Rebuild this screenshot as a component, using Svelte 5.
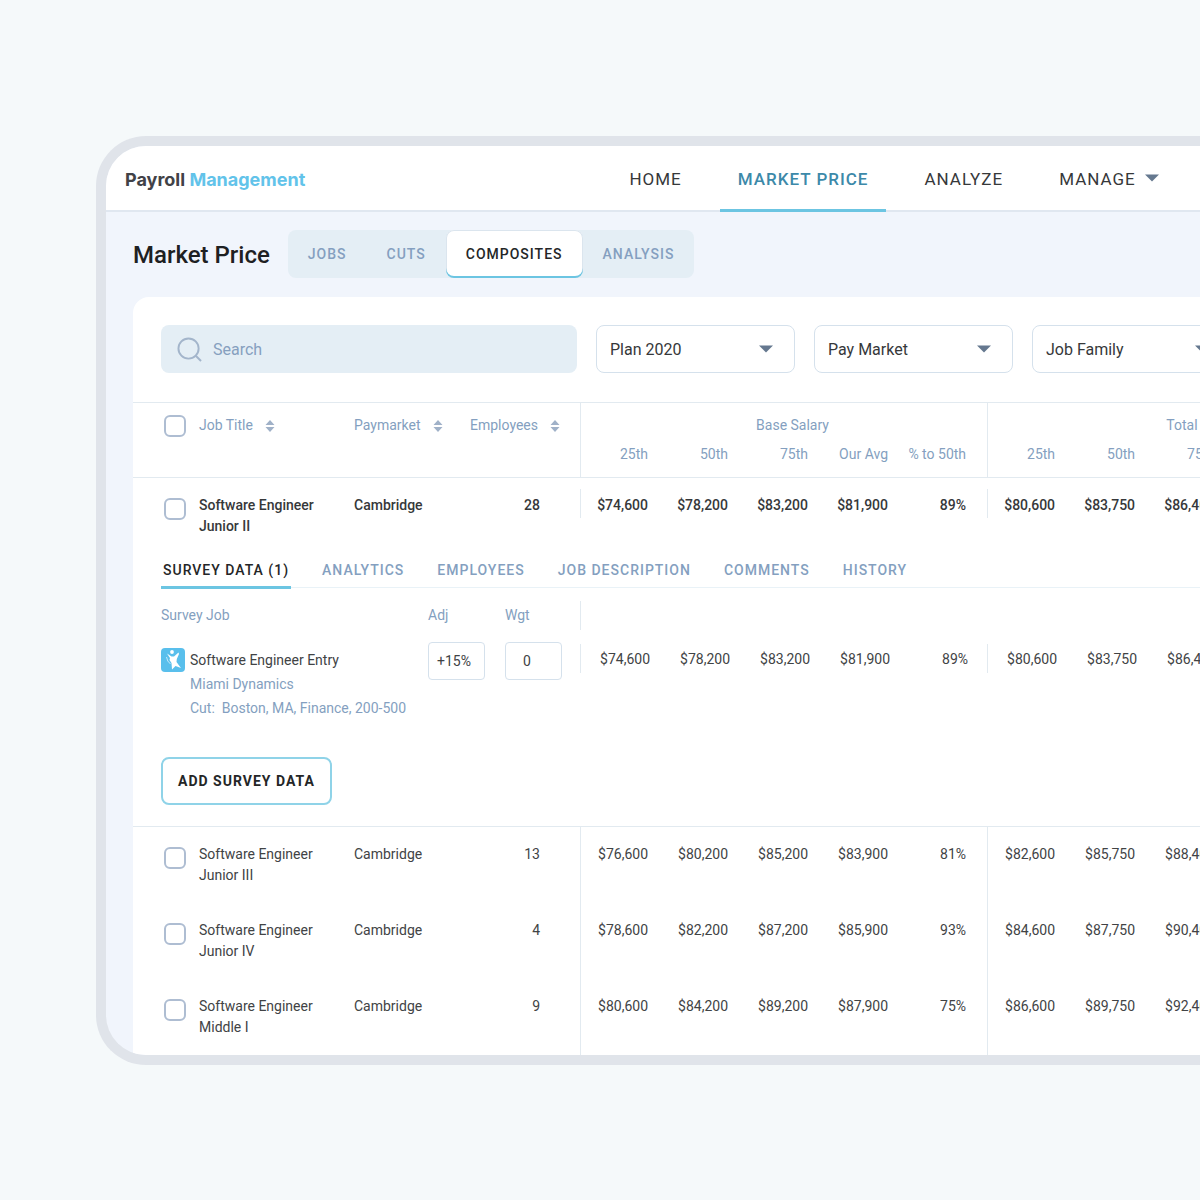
<script>
  const nav = [
    { label: 'HOME' },
    { label: 'MARKET PRICE', active: true },
    { label: 'ANALYZE' },
    { label: 'MANAGE', menu: true }
  ];
  const views = ['JOBS', 'CUTS', 'COMPOSITES', 'ANALYSIS'];
  const filters = ['Plan 2020', 'Pay Market', 'Job Family'];
  const sortable = ['Job Title', 'Paymarket', 'Employees'];
  const measures = ['25th', '50th', '75th', 'Our Avg', '% to 50th'];
  const details = ['SURVEY DATA (1)', 'ANALYTICS', 'EMPLOYEES', 'JOB DESCRIPTION', 'COMMENTS', 'HISTORY'];

  const first = {
    title: 'Software Engineer Junior II', market: 'Cambridge', employees: 28,
    base: ['$74,600', '$78,200', '$83,200', '$81,900', '89%'],
    total: ['$80,600', '$83,750', '$86,400', '$85,100', '91%']
  };
  const rest = [
    {
      title: 'Software Engineer Junior III', market: 'Cambridge', employees: 13,
      base: ['$76,600', '$80,200', '$85,200', '$83,900', '81%'],
      total: ['$82,600', '$85,750', '$88,400', '$87,100', '84%']
    },
    {
      title: 'Software Engineer Junior IV', market: 'Cambridge', employees: 4,
      base: ['$78,600', '$82,200', '$87,200', '$85,900', '93%'],
      total: ['$84,600', '$87,750', '$90,400', '$89,100', '94%']
    },
    {
      title: 'Software Engineer Middle I', market: 'Cambridge', employees: 9,
      base: ['$80,600', '$84,200', '$89,200', '$87,900', '75%'],
      total: ['$86,600', '$89,750', '$92,400', '$91,100', '79%']
    }
  ];

  let view = $state('COMPOSITES');
  let detail = $state('SURVEY DATA (1)');
</script>

{#snippet caret()}
  <svg class="caret" viewBox="0 0 14 8" aria-hidden="true"><path d="M0 0.5h14L7 7.5z" /></svg>
{/snippet}

{#snippet amounts(row)}
  {#each [row.base, row.total] as group}
    {#each group as value, i}
      <td class="num" class:edge={i === 0} class:last={i === 4}>{value}</td>
    {/each}
  {/each}
{/snippet}

{#snippet jobRow(row, kind)}
  <tr class={kind}>
    <td class="tick"><input type="checkbox" aria-label={`Select ${row.title}`} /></td>
    <td class="job">{row.title}</td>
    <td>{row.market}</td>
    <td class="count">{row.employees}</td>
    {@render amounts(row)}
  </tr>
{/snippet}

<div class="page">
  <div class="frame">
    <header>
      <a class="brand" href="#home">Payroll <span>Management</span></a>
      <nav>
        {#each nav as item}
          <a href="#{item.label.toLowerCase().replace(' ', '-')}" class:active={item.active}>
            {item.label}
            {#if item.menu}{@render caret()}{/if}
          </a>
        {/each}
      </nav>
    </header>

    <main>
      <div class="heading">
        <h1>Market Price</h1>
        <div class="views">
          {#each views as name}
            <button type="button" class:active={view === name} onclick={() => (view = name)}>{name}</button>
          {/each}
        </div>
      </div>

      <section class="card">
        <div class="toolbar">
          <label class="search">
            <svg viewBox="0 0 26 26" aria-hidden="true"><circle cx="12" cy="12" r="10.5" /><path d="M19.5 19.5l5.500 5.500" /></svg>
            <input type="text" placeholder="Search" aria-label="Search" />
          </label>
          {#each filters as filter}
            <label class="filter">
              <select aria-label={filter}><option>{filter}</option></select>
              {@render caret()}
            </label>
          {/each}
        </div>

        <table>
          <colgroup>
            <col class="c-tick" /><col class="c-job" /><col class="c-market" /><col class="c-count" />
            {#each [0, 1] as _}
              <col class="c-first" /><col class="c-mid" /><col class="c-mid" /><col class="c-mid" /><col class="c-last" />
            {/each}
          </colgroup>
          <thead>
            <tr>
              <th class="tick"><input type="checkbox" aria-label="Select all jobs" /></th>
              {#each sortable as label}
                <th>
                  <button type="button" class="sort">
                    {label}
                    <svg viewBox="0 0 10 12" aria-hidden="true"><path d="M0.5 5L5 0l4.500 5zM0.5 7h9L5 12z" /></svg>
                  </button>
                </th>
              {/each}
              <th class="group edge" colspan="5">Base Salary</th>
              <th class="group edge" colspan="5">Total Cash</th>
            </tr>
            <tr class="sub">
              <th colspan="4"></th>
              {#each [0, 1] as _}
                {#each measures as label, i}
                  <th class="num" class:edge={i === 0} class:last={i === 4}>{label}</th>
                {/each}
              {/each}
            </tr>
          </thead>
          <tbody>
            {@render jobRow(first, 'open')}
            <tr>
              <td class="tabcell" colspan="14">
                <div class="tabs">
                  {#each details as name}
                    <button type="button" class:active={detail === name} onclick={() => (detail = name)}>{name}</button>
                  {/each}
                </div>
              </td>
            </tr>
            <tr class="surveyhead">
              <td colspan="4">
                <div class="survey"><span>Survey Job</span><span>Adj</span><span>Wgt</span></div>
              </td>
              <td class="edge" colspan="10"></td>
            </tr>
            <tr class="surveyrow">
              <td colspan="4">
                <div class="survey">
                  <div class="source">
                    <svg viewBox="0 0 24 24" aria-hidden="true">
                      <rect width="24" height="24" rx="4" />
                      <circle cx="11" cy="4" r="1.900" />
                      <path d="M6 5.500L10.500 8.500L13 8.500L17.500 4.500L18 6L15.800 11L15.500 14L20 20L14.500 18L11 21.500L10.500 15L8.500 12L9 10z" />
                      <path class="swoosh" d="M5.500 9Q6 13.500 9.500 16" />
                    </svg>
                    <div>
                      <p class="name">Software Engineer Entry</p>
                      <p>Miami Dynamics</p>
                      <p>Cut: &nbsp;Boston, MA, Finance, 200-500</p>
                    </div>
                  </div>
                  <input class="adj" type="text" value="+15%" aria-label="Adj" />
                  <input class="wgt" type="text" value="0" aria-label="Wgt" />
                </div>
              </td>
              {@render amounts(first)}
            </tr>
            <tr>
              <td class="addcell" colspan="14"><button type="button" class="add">ADD SURVEY DATA</button></td>
            </tr>
          </tbody>
          <tbody class="rest">
            {#each rest as row}
              {@render jobRow(row, 'closed')}
            {/each}
          </tbody>
        </table>
      </section>
    </main>
  </div>
</div>

<style>
  :global(body) {
    background: #f5f9fa;
  }

  .page {
    --ink: #242627;
    --muted: #849fc0;
    --line: #e2eaf0;
    --accent: #6cc5e2;
    padding: 136px 0 136px 96px;
    overflow: hidden;
    font-family: Roboto, 'Liberation Sans', sans-serif;
    font-size: 14px;
    line-height: 21px;
    color: #414345;
  }

  button,
  input,
  select {
    font: inherit;
    color: inherit;
    background: none;
    border: 0;
    border-radius: 0;
    margin: 0;
    padding: 0;
    box-sizing: border-box;
    appearance: none;
  }

  button {
    cursor: pointer;
  }

  a {
    color: inherit;
    text-decoration: none;
  }

  .frame {
    border: 10px solid #e0e4ea;
    border-right: 0;
    border-radius: 50px 0 0 50px;
    background: #f1f5fc;
    overflow: hidden;
  }

  header {
    display: flex;
    justify-content: space-between;
    height: 64px;
    background: #fff;
    border-bottom: 2px solid #e0e7f0;
    padding: 0 23px 0 19px;
    line-height: 67px;
  }

  .brand {
    font-family: Inter, 'Open Sans', sans-serif;
    font-size: 18px;
    font-weight: 700;
    color: #414247;
  }

  .brand span {
    color: #62c3ea;
  }

  nav {
    display: flex;
    gap: 20px;
    font-size: 17px;
    letter-spacing: 1px;
    color: #36383a;
  }

  nav a {
    padding: 0 18px;
    box-sizing: border-box;
    height: 66px;
  }

  nav .active {
    color: #3c89a9;
    font-weight: 500;
    border-bottom: 3px solid var(--accent);
  }

  .caret {
    width: 14px;
    height: 8px;
    fill: #65788f;
  }

  nav .caret {
    margin-left: 4px;
    vertical-align: 3px;
  }

  main {
    padding: 18px 0 0 27px;
  }

  .heading {
    display: flex;
    align-items: center;
    gap: 18px;
    margin-bottom: 19px;
  }

  h1 {
    margin: 0;
    padding-top: 2px;
    font-size: 24px;
    font-weight: 500;
    line-height: 32px;
    color: #1e2022;
  }

  .views {
    display: flex;
    background: #e4eef5;
    border-radius: 8px;
    height: 48px;
  }

  .views button {
    padding: 0 20px;
    font-weight: 500;
    letter-spacing: 1px;
    color: var(--muted);
    border-radius: 8px;
  }

  .views .active {
    background: #fff;
    color: var(--ink);
    box-shadow: inset 0 -2px var(--accent), inset 0 0 0 1px #dbe5ee;
  }

  .card {
    background: #fff;
    border-radius: 16px 0 0 0;
  }

  .toolbar {
    display: flex;
    gap: 19px;
    padding: 28px 28px 29px;
  }

  .search {
    flex: 0 0 416px;
    height: 48px;
    display: flex;
    align-items: center;
    gap: 11px;
    padding: 0 16px;
    box-sizing: border-box;
    border-radius: 8px;
    background: #e4eef5;
    font-size: 16px;
  }

  .search svg {
    width: 25px;
    height: 25px;
    fill: none;
    stroke: #a3b5cb;
    stroke-width: 2;
  }

  .search input {
    flex: 1;
    min-width: 0;
    outline: 0;
  }

  .search input::placeholder {
    color: #86a0bf;
    opacity: 1;
  }

  .filter {
    flex: 0 0 199px;
    display: grid;
    align-items: center;
    font-size: 16px;
    color: #36383a;
  }

  .filter select,
  .filter .caret {
    grid-area: 1 / 1;
  }

  .filter select {
    height: 48px;
    padding: 0 13px;
    border: 1px solid #d5e1ec;
    border-radius: 8px;
  }

  .filter .caret {
    justify-self: end;
    margin-right: 22px;
    pointer-events: none;
  }

  table {
    table-layout: fixed;
    width: 1261px;
    border-collapse: separate;
    border-spacing: 0;
  }

  .c-tick { width: 66px; }
  .c-job { width: 155px; }
  .c-market { width: 116px; }
  .c-count { width: 110px; }
  .c-first { width: 78px; }
  .c-mid { width: 80px; }
  .c-last { width: 89px; }

  th,
  td {
    padding: 0;
    text-align: left;
    vertical-align: top;
    font-weight: inherit;
    box-sizing: border-box;
  }

  th {
    color: var(--muted);
    white-space: nowrap;
  }

  thead tr:first-child th {
    border-top: 1px solid var(--line);
    padding: 12px 0 7px;
  }

  .sub th {
    border-bottom: 1px solid var(--line);
    padding-bottom: 12px;
  }

  thead tr:first-child .group {
    text-align: center;
    padding-left: 17px;
  }

  thead .edge,
  .rest .edge {
    border-left: 1px solid var(--line);
  }

  tr .num {
    text-align: right;
    padding-right: 10px;
  }

  tr .last {
    padding-right: 21px;
  }

  .sort {
    display: flex;
    align-items: center;
    gap: 12px;
  }

  .sort svg {
    width: 10px;
    height: 12px;
    fill: #a0b1c8;
  }

  .tick input {
    display: block;
    width: 22px;
    height: 22px;
    margin-left: 31px;
    border: 2px solid #aebdd2;
    border-radius: 6px;
  }

  .tick input:checked {
    background: var(--accent);
  }

  .open td,
  .closed td {
    padding-top: 17px;
    padding-bottom: 17px;
  }

  .open td {
    padding-bottom: 0;
    font-weight: 500;
    color: #36383a;
  }

  .closed .tick,
  .open .tick {
    padding-top: 20px;
  }

  tr .job {
    padding-right: 30px;
  }

  tr .count {
    text-align: right;
    padding-right: 40px;
  }

  .open .edge,
  .surveyhead .edge,
  .surveyrow .edge {
    background: linear-gradient(var(--line), var(--line)) no-repeat 0 11px / 1px 29px;
  }

  .tabcell {
    padding: 16px 0 0 28px;
  }

  .tabs {
    display: flex;
    gap: 29px;
    border-bottom: 1px solid #e9f2f7;
  }

  .tabs button {
    height: 36px;
    margin-bottom: -2px;
    padding: 0 2px 1px;
    font-weight: 500;
    letter-spacing: 1px;
    color: var(--muted);
    border-top: 2px solid transparent;
    border-bottom: 3px solid transparent;
  }

  .tabs .active {
    color: var(--ink);
    border-bottom-color: var(--accent);
  }

  .survey {
    display: grid;
    grid-template-columns: 1fr 57px 57px;
    column-gap: 20px;
    align-items: start;
    padding: 0 18px 0 28px;
  }

  .surveyhead td {
    padding: 17px 0 16px;
    color: var(--muted);
  }

  .surveyhead .edge {
    background-position: 0 13px;
  }

  .surveyrow .edge {
    background-position: 0 2px;
  }

  .surveyrow .num {
    padding-top: 7px;
    padding-right: 8px;
  }

  .surveyrow .last {
    padding-right: 19px;
  }

  .source {
    display: flex;
    gap: 5px;
    padding-top: 6px;
    color: var(--muted);
    line-height: 24px;
  }

  .source svg {
    width: 24px;
    height: 24px;
    fill: #fff;
  }

  .source rect {
    fill: #59bfec;
  }

  .source .swoosh {
    fill: none;
    stroke: #c5e8f8;
    stroke-width: 1;
  }

  .source p {
    margin: 0;
  }

  .source .name {
    color: #414345;
  }

  .survey input {
    height: 38px;
    width: 57px;
    border: 1px solid #d5e1ec;
    border-radius: 4px;
  }

  .survey .adj {
    padding-left: 8px;
  }

  .survey .wgt {
    padding-left: 17px;
  }

  .addcell {
    padding: 37px 0 21px 28px;
    border-bottom: 1px solid var(--line);
  }

  .add {
    display: block;
    height: 48px;
    padding: 0 15px;
    border: 2px solid #8fd3e8;
    border-radius: 8px;
    font-weight: 700;
    letter-spacing: 1px;
    color: var(--ink);
  }
</style>
